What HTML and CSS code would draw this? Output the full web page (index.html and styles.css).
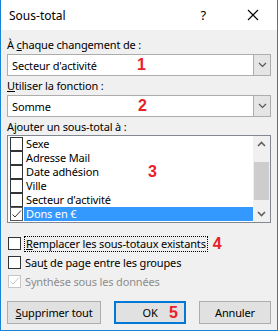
FILE: index.html
```html
<!DOCTYPE html>
<html lang="fr">
<head>
    <meta charset="UTF-8">
    <title>Sous-total</title>
    <link rel="stylesheet" href="styles.css">
</head>
<body>
    <div class="window">
        <!-- Barre de titre -->
        <div class="titlebar">
            <span class="title">Sous-total</span>
            <span class="help">?</span>
            <svg class="close" width="12" height="12" viewBox="0 0 12 12">
                <path d="M1 1 L11 11 M11 1 L1 11" stroke="#000" stroke-width="1.1" fill="none"/>
            </svg>
        </div>

        <div class="content">
            <div class="label">À <u>c</u>haque changement de :</div>
            <div class="combo">
                <span class="combo-text">Secteur d'activité</span>
                <span class="num num-1">1</span>
                <span class="combo-btn">
                    <svg width="9" height="6" viewBox="0 0 9 6"><path d="M1 1 L4.5 4.5 L8 1" stroke="#555" stroke-width="1.2" fill="none"/></svg>
                </span>
            </div>

            <div class="label"><u>U</u>tiliser la fonction :</div>
            <div class="combo">
                <span class="combo-text">Somme</span>
                <span class="num num-2">2</span>
                <span class="combo-btn">
                    <svg width="9" height="6" viewBox="0 0 9 6"><path d="M1 1 L4.5 4.5 L8 1" stroke="#555" stroke-width="1.2" fill="none"/></svg>
                </span>
            </div>

            <div class="label label-list">A<u>j</u>outer un sous-total à :</div>
            <div class="listbox">
                <div class="items">
                    <div class="item"><span class="box"></span>Sexe</div>
                    <div class="item"><span class="box"></span>Adresse Mail</div>
                    <div class="item"><span class="box"></span>Date adhésion</div>
                    <div class="item"><span class="box"></span>Ville</div>
                    <div class="item"><span class="box"></span>Secteur d'activité</div>
                    <div class="item selected">
                        <span class="box checked">
                            <svg width="11" height="11" viewBox="0 0 11 11"><path d="M1.5 5.5 L4 8 L10 1.5" stroke="#333" stroke-width="1" fill="none"/></svg>
                        </span>
                        <span class="sel-text">Dons en €</span>
                    </div>
                    <span class="num num-3">3</span>
                </div>
                <div class="scrollbar">
                    <svg class="arrow" width="9" height="6" viewBox="0 0 9 6"><path d="M1 5 L4.5 1.5 L8 5" stroke="#606060" stroke-width="1.6" fill="none"/></svg>
                    <div class="track">
                        <div class="thumb"></div>
                    </div>
                    <svg class="arrow" width="9" height="6" viewBox="0 0 9 6"><path d="M1 1 L4.5 4.5 L8 1" stroke="#606060" stroke-width="1.6" fill="none"/></svg>
                </div>
            </div>

            <div class="options">
                <div class="option">
                    <span class="box"></span>
                    <span class="focus"><u>R</u>emplacer les sous-totaux existants</span>
                    <span class="num num-4">4</span>
                </div>
                <div class="option">
                    <span class="box"></span>
                    <span>Sau<u>t</u> de page entre les groupes</span>
                </div>
                <div class="option disabled">
                    <span class="box">
                        <svg width="11" height="11" viewBox="0 0 11 11"><path d="M1.5 5.5 L4 8 L10 1.5" stroke="#c5c5c5" stroke-width="1" fill="none"/></svg>
                    </span>
                    <span>Synthèse sous les données</span>
                </div>
            </div>

            <div class="buttons">
                <button class="btn"><u>S</u>upprimer tout</button>
                <button class="btn btn-default">OK<span class="num num-5">5</span></button>
                <button class="btn">Annuler</button>
            </div>
        </div>
    </div>
</body>
</html>
```

FILE: styles.css
```css
/* Mise en page générale */
* {
    margin: 0;
    padding: 0;
    box-sizing: border-box;
}

body {
    width: 278px;
    height: 331px;
    overflow: hidden;
    font-family: "Noto Sans", "Liberation Sans", sans-serif;
    font-size: 11px;
    letter-spacing: -0.15px;
    color: #000;
    background: #f0f0f0;
}

/* Fenêtre avec la bordure bleue */
.window {
    width: 278px;
    height: 331px;
    border: 1px solid #1883d7;
    border-top: none;
    background: #f0f0f0;
}

/* Barre de titre */
.titlebar {
    height: 30px;
    background: #fff;
    display: flex;
    align-items: center;
    padding-left: 8px;
}

.title {
    flex: 1;
    font-size: 12px;
    letter-spacing: 0;
}

.help {
    font-size: 13px;
    margin-right: 41px;
}

.close {
    margin-right: 18px;
}

/* Contenu du dialogue */
.content {
    padding: 7px 6px 0 6px;
}

.label {
    height: 15px;
    line-height: 15px;
    margin-bottom: 2px;
}

.label + .combo {
    margin-bottom: 2px;
}

.label-list {
    margin-top: 1px;
    margin-bottom: 1px;
}

/* Listes déroulantes */
.combo {
    position: relative;
    height: 22px;
    background: #fff;
    border: 1px solid #adadad;
    display: flex;
    align-items: center;
}

.combo-text {
    flex: 1;
    padding-left: 4px;
}

.combo-btn {
    width: 17px;
    height: 20px;
    background: #e5e5e5;
    border-left: 1px solid #adadad;
    display: flex;
    align-items: center;
    justify-content: center;
}

/* Numéros rouges */
.num {
    position: absolute;
    color: #e8202a;
    font-family: "Liberation Sans", sans-serif;
    font-weight: bold;
    font-size: 16px;
    line-height: 16px;
    letter-spacing: 0;
}

.num-1 { left: 129px; top: 2px; }
.num-2 { left: 130px; top: 2px; }
.num-3 { left: 140px; top: 28px; }
.num-4 { position: static; margin-left: 6px; }
.num-5 { left: 53px; top: 2px; }

/* Liste avec cases à cocher */
.listbox {
    height: 88px;
    background: #fff;
    border: 1px solid #828790;
    display: flex;
}

.items {
    position: relative;
    flex: 1;
    padding-top: 1px;
    padding-left: 2px;
}

.item {
    height: 14px;
    line-height: 14px;
    display: flex;
    align-items: center;
}

.box {
    width: 13px;
    height: 13px;
    border: 1px solid #333;
    background: #fff;
    margin-right: 3px;
    flex-shrink: 0;
    display: flex;
    align-items: center;
    justify-content: center;
}

.item .box {
    width: 13px;
    height: 14px;
}

.box.checked {
    border-color: #555;
}

.sel-text {
    flex: 1;
    background: #3399ff;
    color: #fff;
    padding-left: 2px;
    height: 14px;
    margin-left: -2px;
}

.scrollbar {
    width: 17px;
    background: #f0f0f0;
    display: flex;
    flex-direction: column;
    align-items: center;
}

.arrow {
    margin: 5px 0;
}

.track {
    flex: 1;
    width: 100%;
    padding-top: 10px;
    padding-bottom: 2px;
}

.thumb {
    height: 38px;
    margin: 0 1px;
    background: #cdcdcd;
}

/* Options */
.options {
    margin-top: 11px;
}

.option {
    position: relative;
    height: 19px;
    display: flex;
    align-items: center;
}

.option .box {
    margin-left: 1px;
    margin-right: 4px;
}

.focus {
    outline: 1px dotted #000;
    padding: 0 1px;
    line-height: 14px;
}

.disabled {
    color: #8d8d8d;
}

.disabled .box {
    border-color: #c5c5c5;
}

/* Boutons */
.buttons {
    display: flex;
    justify-content: space-between;
    margin-top: 10px;
}

.btn {
    position: relative;
    height: 23px;
    font-family: inherit;
    font-size: 11px;
    letter-spacing: -0.15px;
    background: #e1e1e1;
    border: 1px solid #adadad;
    width: 72px;
}

.btn:first-child {
    width: 94px;
}

.btn-default {
    border: 2px solid #0078d7;
}
```
